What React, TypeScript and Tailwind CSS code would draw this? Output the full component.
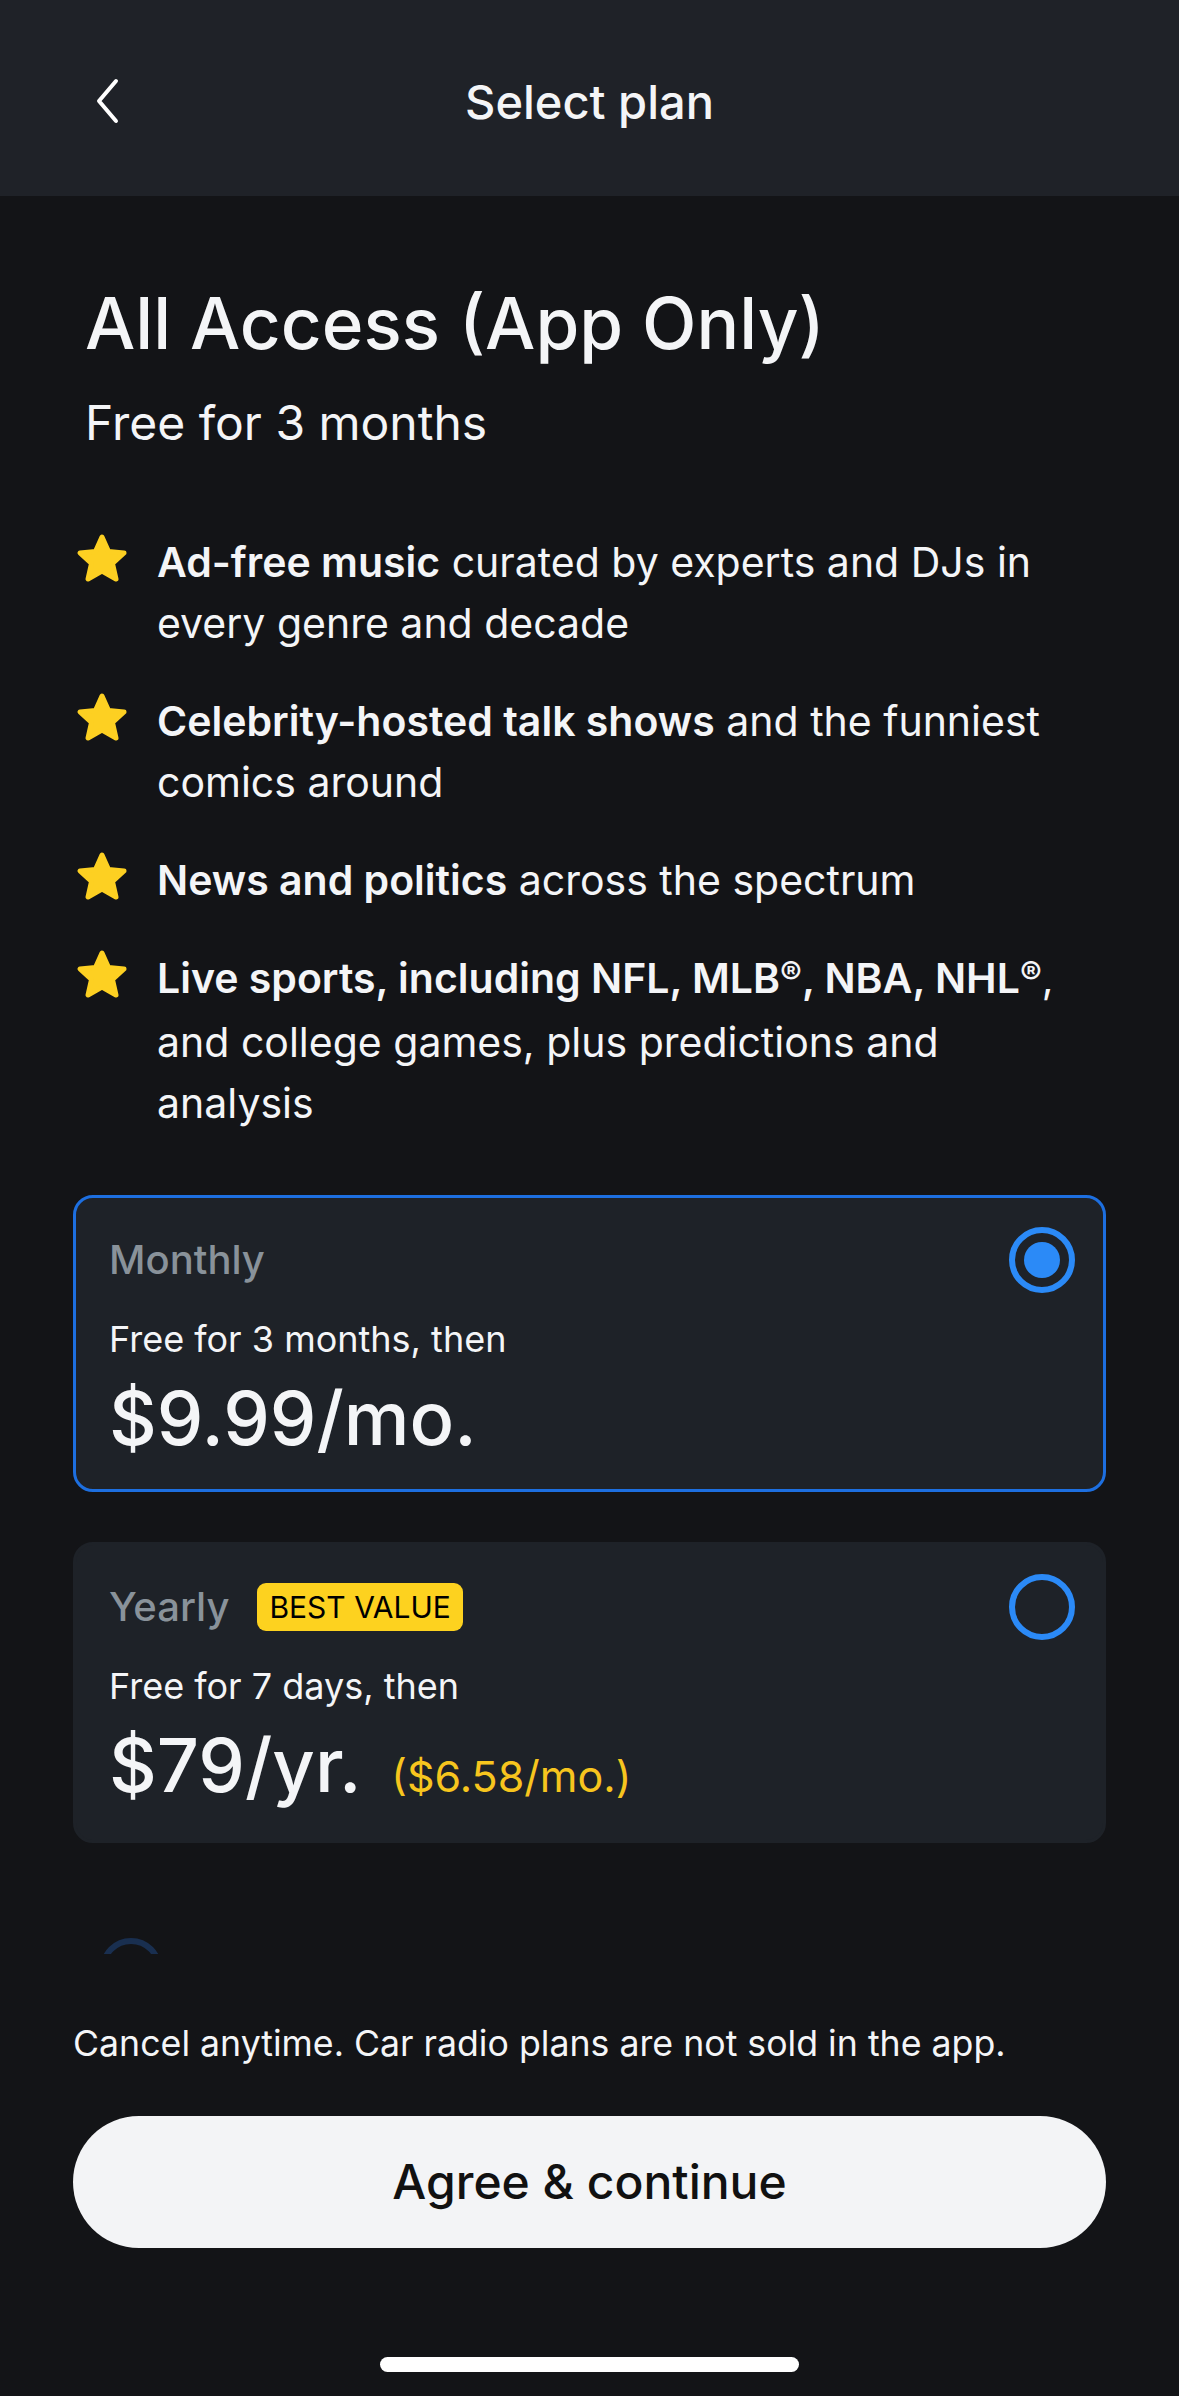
import { ReactNode } from 'react'

function Star() {
    return (
        <svg width="54" height="52" viewBox="0 0 54 52" className="shrink-0 mt-[1px]">
            <path
                d="M27 4 L33.5 18.5 L49 20 L37.5 30.5 L41 46 L27 38 L13 46 L16.5 30.5 L5 20 L20.5 18.5 Z"
                fill="#fdd022"
                stroke="#fdd022"
                strokeWidth="5"
                strokeLinejoin="round"
            />
        </svg>
    )
}

function Feature({ bold, rest }: { bold: ReactNode; rest: string }) {
    return (
        <div className="flex gap-[28px]">
            <Star />
            <p className="text-[41px] leading-[61px] text-[#f4f5f7]">
                <span className="font-semibold">{bold}</span>
                {rest}
            </p>
        </div>
    )
}

const Reg = () => <span className="text-[0.8em] relative top-[-0.25em]">®</span>

function Radio({ checked }: { checked: boolean }) {
    return (
        <div className="w-[66px] h-[66px] rounded-full border-[6px] border-[#2b8af7] flex items-center justify-center shrink-0">
            {checked && <div className="w-[36px] h-[36px] rounded-full bg-[#2b8af7]" />}
        </div>
    )
}

function PlanCard({
    name,
    badge,
    trial,
    price,
    perMonth,
    selected,
}: {
    name: string
    badge?: string
    trial: string
    price: string
    perMonth?: string
    selected: boolean
}) {
    return (
        <div
            className={
                'rounded-[20px] bg-[#1e2228] border-[3px] pl-[33px] pr-[28px] pt-[29px] pb-[31px] ' +
                (selected ? 'border-[#1d6fe0]' : 'border-[#1e2228]')
            }
        >
            <div className="flex items-center justify-between">
                <div className="flex items-center gap-[28px]">
                    <span className="text-[40px] leading-[48px] font-medium text-[#89929a]">{name}</span>
                    {badge && (
                        <span className="bg-[#fdd21f] text-black rounded-[9px] h-[48px] px-[12px] flex items-center text-[30px]">
                            {badge}
                        </span>
                    )}
                </div>
                <Radio checked={selected} />
            </div>
            <p className="mt-[26px] text-[36px] leading-[40px] text-[#f4f5f7]">{trial}</p>
            <div className="mt-[19px] flex items-baseline gap-[30px]">
                <span className="text-[74px] leading-[80px] font-medium text-[#f4f5f7]">{price}</span>
                {perMonth && <span className="text-[43px] text-[#f7c51e]">{perMonth}</span>}
            </div>
        </div>
    )
}

export default function App() {
    return (
        <div className="w-[1179px] h-[2396px] bg-[#131417] text-white font-['Inter',sans-serif] overflow-hidden flex flex-col">
            <header className="h-[196px] bg-[#1f2228] relative flex items-center justify-center shrink-0 pt-[8px]">
                <button className="absolute left-[80px] top-[70px] w-[52px] h-[62px] flex items-center justify-center">
                    <svg width="30" height="48" viewBox="0 0 30 48">
                        <path d="M25 4 L8 24 L25 44" fill="none" stroke="#ffffff" strokeWidth="4" strokeLinecap="round" strokeLinejoin="round" />
                    </svg>
                </button>
                <h1 className="text-[47px] font-medium text-[#f4f5f7]">Select plan</h1>
            </header>

            <main className="px-[73px] flex flex-col">
                <h2 className="mt-[84px] pl-[12px] text-[71px] leading-[86px] font-medium text-[#f4f5f7]">
                    All Access (App Only)
                </h2>
                <p className="mt-[30px] pl-[12px] text-[48px] leading-[54px] text-[#f4f5f7]">Free for 3 months</p>

                <div className="mt-[82px] flex flex-col gap-[37px] pl-[2px] pr-[30px]">
                    <Feature bold="Ad-free music" rest=" curated by experts and DJs in every genre and decade" />
                    <Feature bold="Celebrity-hosted talk shows" rest=" and the funniest comics around" />
                    <Feature bold="News and politics" rest=" across the spectrum" />
                    <Feature
                        bold={
                            <>
                                Live sports, including NFL, MLB<Reg />, NBA, NHL<Reg />
                            </>
                        }
                        rest=", and college games, plus predictions and analysis"
                    />
                </div>

                <div className="mt-[61px] flex flex-col gap-[50px]">
                    <PlanCard name="Monthly" trial="Free for 3 months, then" price="$9.99/mo." selected />
                    <PlanCard
                        name="Yearly"
                        badge="BEST VALUE"
                        trial="Free for 7 days, then"
                        price="$79/yr."
                        perMonth="($6.58/mo.)"
                        selected={false}
                    />
                </div>

                <div className="mt-[95px] ml-[27px] h-[16px] overflow-hidden opacity-50">
                    <div className="w-[62px] h-[62px] rounded-full border-[6px] border-[#1f4a8a]" />
                </div>

                <p className="mt-[68px] text-[35.7px] leading-[42px] text-[#f4f5f7]">
                    Cancel anytime. Car radio plans are not sold in the app.
                </p>

                <button className="mt-[52px] h-[132px] w-full rounded-full bg-[#f3f4f6] text-[#111111] text-[48px] font-medium">
                    Agree &amp; continue
                </button>
            </main>

            <div className="mt-auto mb-[24px] mx-auto w-[419px] h-[15px] rounded-full bg-white" />
        </div>
    )
}
